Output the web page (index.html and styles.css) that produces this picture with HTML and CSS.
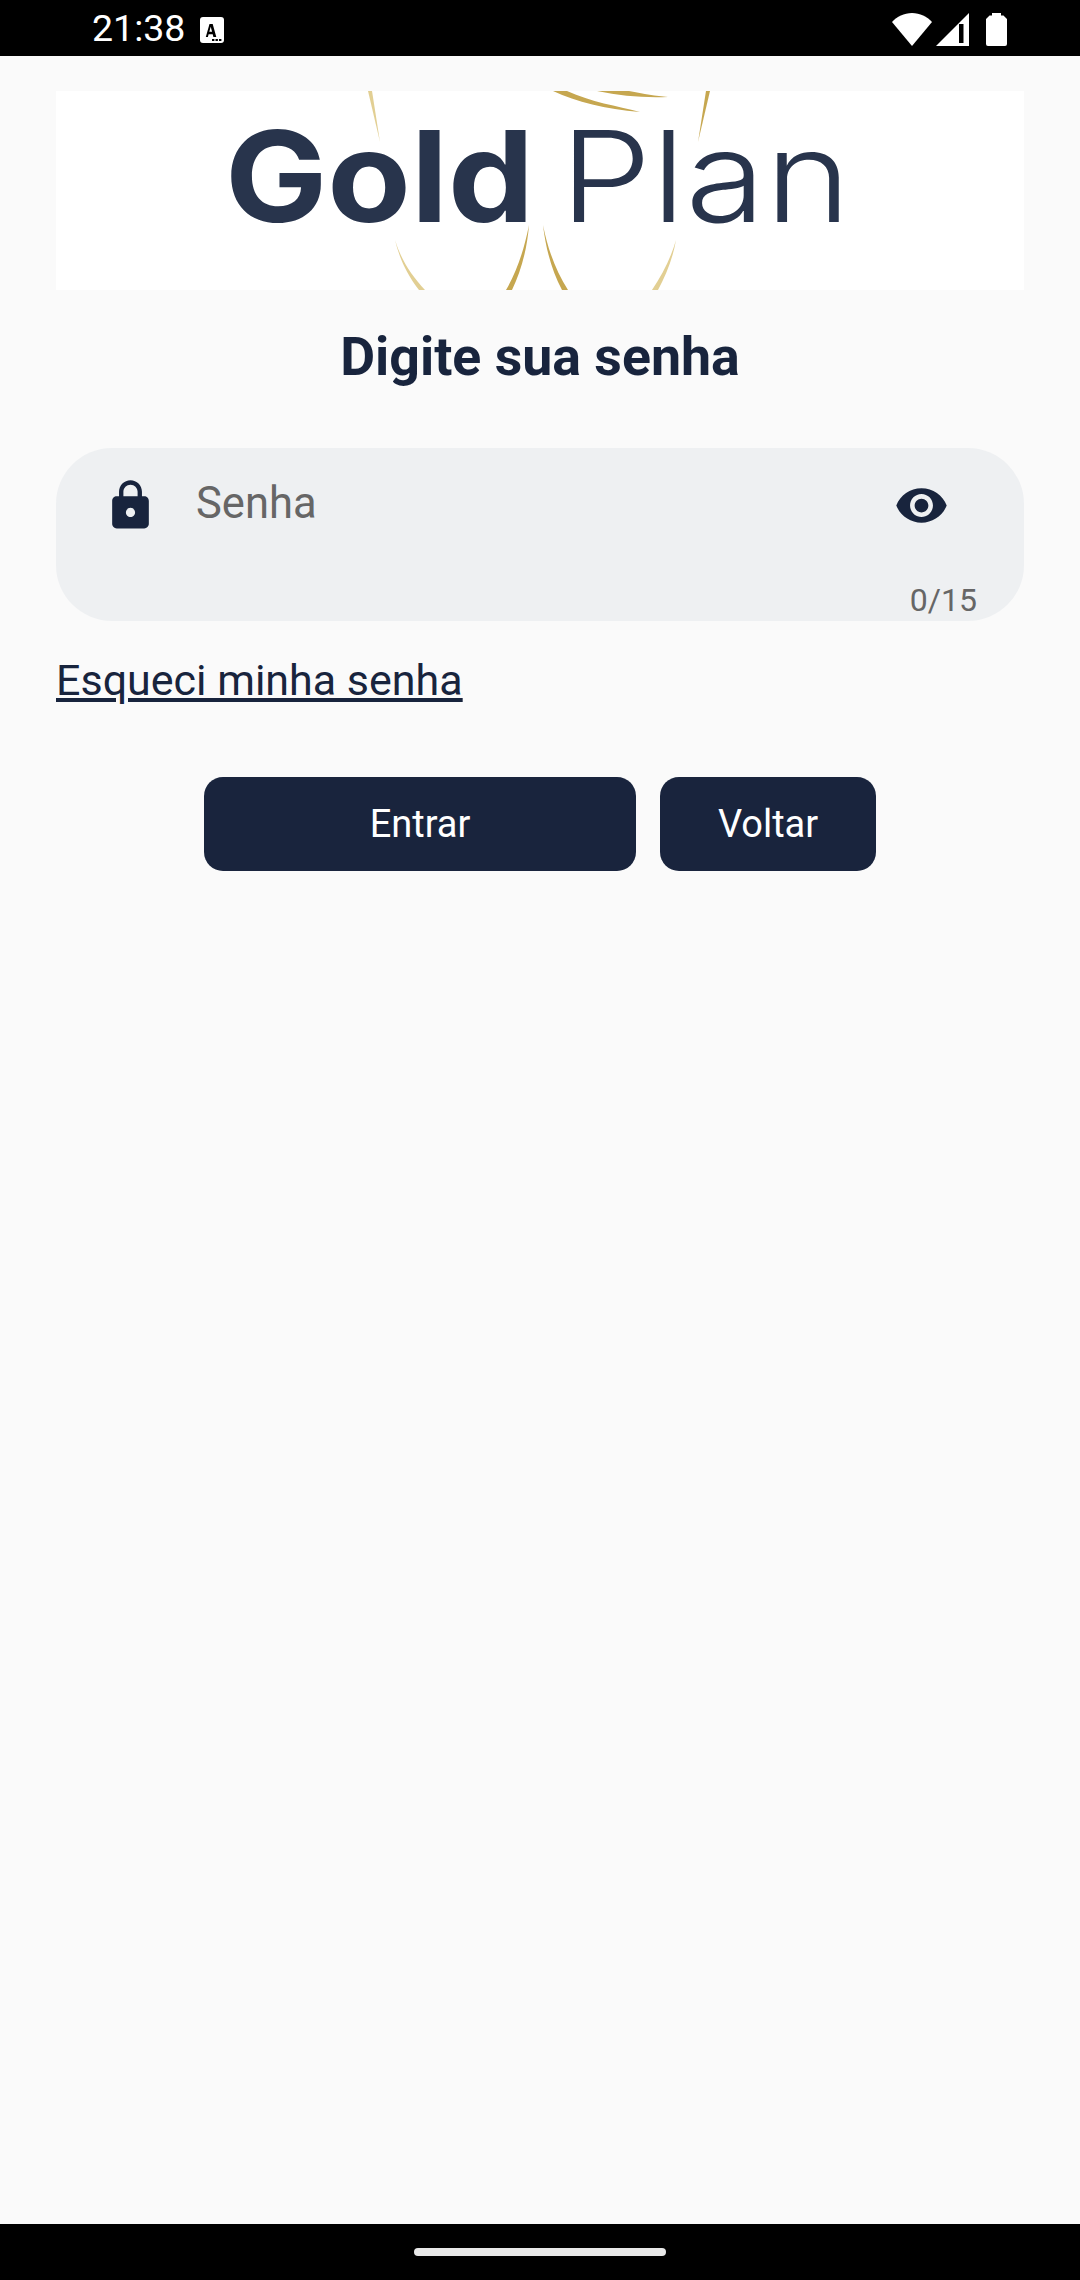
FILE: index.html
```html
<!DOCTYPE html>
<html lang="pt-BR">
<head>
  <meta charset="UTF-8" />
  <meta name="viewport" content="width=device-width, initial-scale=1.0" />
  <title>Gold Plan</title>
  <link rel="stylesheet" href="styles.css">
</head>
<body>
  <div class="status-bar">
    <span class="clock">21:38</span>
    <svg class="notif" viewBox="0 0 24 26">
      <rect width="24" height="26" rx="3" fill="#fff"/>
      <path d="M9.500 7h3.200l3.600 13h-2.900l-.7-2.800H8.600L7.900 20H5.800zM9.300 14.800h2.800L10.700 9.800z" fill="#000"/>
      <rect x="12" y="22" width="2.400" height="2" fill="#000"/><rect x="15.500" y="22" width="2.400" height="2" fill="#000"/><rect x="19" y="22" width="2.400" height="2" fill="#000"/>
    </svg>
    <div class="status-icons">
      <svg class="wifi" viewBox="0 0 40 33"><path d="M20 33L0 9C5 3.500 12 0 20 0s15 3.500 20 9z" fill="#fff"/></svg>
      <svg class="signal" viewBox="0 0 35 33">
        <path d="M34 0v33H1z" fill="#fff"/>
        <path d="M24 11h4.500v19H24z" fill="#000"/>
      </svg>
      <svg class="battery" viewBox="0 0 21 33"><path d="M6 0h9v2.500h2.500L21 6v25a2 2 0 0 1-2 2H2a2 2 0 0 1-2-2V6l3.500-3.500H6z" fill="#fff"/></svg>
    </div>
  </div>

  <main class="content">
    <svg class="logo" viewBox="0 0 968 199">
      <g fill="#c6a750">
        <path d="M312 0h4l8 51z" fill="#e2cf93"/>
        <path d="M650 0h4l-12 51z"/>
        <path d="M497 0h14c24 11 50 15 73 21-35-3-63-10-87-21z"/>
        <path d="M541 0h32c15 3 27 5 39 6-24 1-47-1-71-6z"/>
        <path d="M339 149c6 20 17 36 30 50h-6c-12-15-20-33-24-50z" fill="#e2cf93"/>
        <path d="M473 134c-5 25-12 46-23 65h6c9-19 15-40 17-65z"/>
        <path d="M487 134c3 25 9 46 19 65h6c-12-19-20-40-25-65z"/>
        <path d="M620 149c-5 18-14 35-24 50h6c8-15 15-32 18-50z" fill="#e2cf93"/>
      </g>
      <text class="logo-bold" x="169" y="131" textLength="309" lengthAdjust="spacingAndGlyphs">Gold</text>
      <text class="logo-light" x="504" y="131" textLength="291" lengthAdjust="spacingAndGlyphs">Plan</text>
    </svg>

    <h1 class="title">Digite sua senha</h1>

    <div class="field">
      <div class="field-row">
        <svg class="icon" viewBox="0 0 24 24"><path d="M18 8h-1V6c0-2.760-2.240-5-5-5S7 3.240 7 6v2H6c-1.100 0-2 .9-2 2v10c0 1.100.9 2 2 2h12c1.100 0 2-.9 2-2V10c0-1.100-.9-2-2-2zm-6 9c-1.100 0-2-.9-2-2s.9-2 2-2 2 .9 2 2-.9 2-2 2zm3.100-9H8.900V6c0-1.710 1.390-3.100 3.100-3.100 1.710 0 3.100 1.390 3.100 3.100v2z"/></svg>
        <span class="placeholder">Senha</span>
        <svg class="icon" viewBox="0 0 24 24"><path d="M12 4.500C7 4.500 2.730 7.610 1 12c1.730 4.390 6 7.500 11 7.500s9.270-3.110 11-7.500c-1.730-4.390-6-7.500-11-7.500zM12 17c-2.760 0-5-2.240-5-5s2.240-5 5-5 5 2.240 5 5-2.240 5-5 5zm0-8c-1.660 0-3 1.340-3 3s1.340 3 3 3 3-1.340 3-3-1.340-3-3-3z"/></svg>
      </div>
      <span class="counter">0/15</span>
    </div>

    <a class="forgot" href="#">Esqueci minha senha</a>

    <div class="actions">
      <button class="btn btn-wide">Entrar</button>
      <button class="btn btn-narrow">Voltar</button>
    </div>
  </main>

  <div class="nav-bar"><div class="nav-handle"></div></div>
</body>
</html>
```

FILE: styles.css
```css
* {
  box-sizing: border-box;
}
html, body {
  height: 100%;
}
body {
  margin: 0;
  display: flex;
  flex-direction: column;
  background-color: #fafafa;
  font-family: Roboto, sans-serif;
  color: #18243d;
}

.status-bar {
  height: 56px;
  flex: none;
  display: flex;
  align-items: center;
  background-color: #000;
  color: #fff;
  padding: 0 73px 0 92px;
}
.clock {
  font-size: 37.500px;
  line-height: 56px;
}
.notif {
  width: 24px;
  height: 26px;
  margin: 3px 0 0 15px;
}
.status-icons {
  margin: 2px 0 0 auto;
  display: flex;
  align-items: center;
  gap: 3px;
}
.wifi {
  width: 40px;
  height: 33px;
}
.signal {
  width: 35px;
  height: 33px;
}
.battery {
  width: 21px;
  height: 33px;
  margin-left: 13px;
}

.content {
  flex: 1;
  padding: 35px 56px 0;
  display: flex;
  flex-direction: column;
}
.logo {
  display: block;
  width: 968px;
  height: 199px;
  background-color: #fff;
}
.logo-bold {
  font-family: Inter, sans-serif;
  font-weight: 700;
  font-size: 126px;
  fill: #28344c;
}
.logo-light {
  font-family: Inter, sans-serif;
  font-weight: 300;
  font-size: 126px;
  fill: #28344c;
}
.title {
  margin: 38px 0 0;
  text-align: center;
  font-size: 53.700px;
  line-height: 58px;
  font-weight: 700;
}

.field {
  margin-top: 62px;
  height: 173px;
  border-radius: 56px;
  background-color: #eef0f2;
  padding: 30px 47px 0;
  display: flex;
  flex-direction: column;
}
.field-row {
  display: flex;
  align-items: flex-start;
}
.icon {
  width: 55px;
  height: 55px;
  flex: none;
  fill: #18243d;
}
.placeholder {
  flex: 1;
  margin: 2px 0 0 38px;
  font-size: 43.500px;
  line-height: 48px;
  color: #666;
}
.field-row .icon:last-child {
  margin-right: 28px;
}
.counter {
  align-self: flex-end;
  margin-top: 50px;
  font-size: 32px;
  line-height: 34px;
  color: #666;
}

.forgot {
  margin-top: 33px;
  align-self: flex-start;
  font-size: 43px;
  line-height: 52px;
  color: #18243d;
}

.actions {
  margin-top: 71px;
  display: flex;
  justify-content: center;
  gap: 24px;
}
.btn {
  height: 94px;
  border: none;
  border-radius: 19px;
  background-color: #19243d;
  color: #fff;
  font-family: Roboto, sans-serif;
  font-size: 38px;
}
.btn-wide {
  width: 432px;
}
.btn-narrow {
  width: 216px;
}

.nav-bar {
  height: 56px;
  flex: none;
  background-color: #000;
  display: flex;
  justify-content: center;
  padding-top: 24px;
}
.nav-handle {
  width: 252px;
  height: 8px;
  border-radius: 4px;
  background-color: #e8e8e8;
}
```
